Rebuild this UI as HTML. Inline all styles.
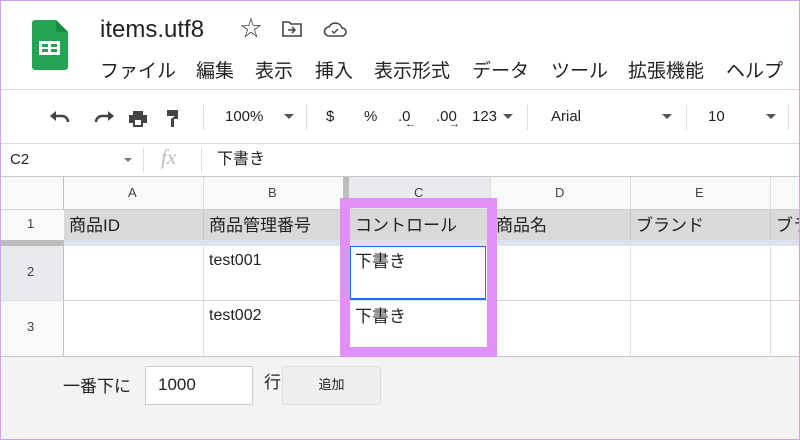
<!DOCTYPE html><html><head><meta charset="utf-8"><style>
*{box-sizing:border-box;margin:0;padding:0}
body{width:800px;height:440px;overflow:hidden;background:#fff;font-family:"Liberation Sans","Noto Sans CJK JP",sans-serif;color:#222;position:relative;line-height:1.15}
.a{position:absolute;white-space:nowrap}
.frame{position:absolute;left:0;top:0;width:800px;height:440px;border:1px solid #c9a6ef;pointer-events:none;z-index:10}
.m{position:absolute;top:61px;font-size:19px;white-space:nowrap}
</style></head><body>
<svg class="a" style="left:32px;top:20px" width="36" height="50" viewBox="0 0 36 50"><path d="M4 0h20l12 12v35a3 3 0 0 1-3 3H3a3 3 0 0 1-3-3V3a3 3 0 0 1 3-3z" fill="#23a455"/><path d="M24 0v12h12z" fill="#178a3f"/><rect x="7" y="21" width="21" height="14" fill="#fff"/><rect x="10" y="24" width="6" height="3" fill="#23a455"/><rect x="19" y="24" width="6" height="3" fill="#23a455"/><rect x="10" y="29" width="6" height="3" fill="#23a455"/><rect x="19" y="29" width="6" height="3" fill="#23a455"/></svg>
<div class="a" style="left:100px;top:16px;font-size:24px">items.utf8</div>
<div class="a" style="left:240px;top:16px;font-size:22px;color:#444">☆</div>
<svg class="a" style="left:282px;top:21px" width="20" height="16"><path d="M1 1h6l2 2h10v12H1z" fill="none" stroke="#444" stroke-width="1.6"/><path d="M6 9h7M10 6l3 3-3 3" fill="none" stroke="#444" stroke-width="1.5"/></svg>
<svg class="a" style="left:323px;top:22px" width="24" height="16"><path d="M6 14h13a4 4 0 0 0 0-8 7 7 0 0 0-13-1 4.5 4.5 0 0 0 0 9z" fill="none" stroke="#444" stroke-width="1.6"/><path d="M9 9l2 2 4-4" fill="none" stroke="#444" stroke-width="1.5"/></svg>
<div class="m" style="left:100px">ファイル</div>
<div class="m" style="left:196px">編集</div>
<div class="m" style="left:255px">表示</div>
<div class="m" style="left:315px">挿入</div>
<div class="m" style="left:374px">表示形式</div>
<div class="m" style="left:472px">データ</div>
<div class="m" style="left:551px">ツール</div>
<div class="m" style="left:628px">拡張機能</div>
<div class="m" style="left:726px">ヘルプ</div>
<div class="a" style="left:0;top:89px;width:800px;height:1px;background:#dadce0"></div>
<svg class="a" style="left:48px;top:108px" width="130" height="20"><path d="M4 8h10a6 6 0 0 1 6 6" fill="none" stroke="#444" stroke-width="2.5"/><path d="M2 8l6-5v10z" fill="#444"/><path d="M64 8H54a6 6 0 0 0-6 6" fill="none" stroke="#444" stroke-width="2.5"/><path d="M66 8l-6-5v10z" fill="#444"/><path d="M85 3h10v4H85zM81 7h18v8h-4v4H85v-4h-4z" fill="#444"/><rect x="87" y="12" width="6" height="5" fill="#fff"/><path d="M119 2h12v6h-12zM131 5h2v6h-7v8h-3v-8" fill="#444"/></svg>
<div class="a" style="left:203px;top:105px;width:1px;height:25px;background:#dadce0"></div>
<div class="a" style="left:225px;top:108px;font-size:15px">100%</div>
<svg class="a" style="left:284px;top:114px" width="10" height="6"><path d="M0 0h10L5 5z" fill="#555"/></svg>
<div class="a" style="left:306px;top:105px;width:1px;height:25px;background:#dadce0"></div>
<div class="a" style="left:326px;top:108px;font-size:15px">$</div>
<div class="a" style="left:364px;top:108px;font-size:15px">%</div>
<div class="a" style="left:398px;top:108px;font-size:15px">.0</div>
<div class="a" style="left:436px;top:108px;font-size:15px">.00</div>
<div class="a" style="left:405px;top:118px;font-size:11px">←</div>
<div class="a" style="left:449px;top:118px;font-size:11px">→</div>
<div class="a" style="left:472px;top:108px;font-size:15px">123</div>
<svg class="a" style="left:503px;top:114px" width="10" height="6"><path d="M0 0h10L5 5z" fill="#555"/></svg>
<div class="a" style="left:527px;top:105px;width:1px;height:25px;background:#dadce0"></div>
<div class="a" style="left:551px;top:108px;font-size:15px">Arial</div>
<svg class="a" style="left:662px;top:114px" width="10" height="6"><path d="M0 0h10L5 5z" fill="#555"/></svg>
<div class="a" style="left:686px;top:105px;width:1px;height:25px;background:#dadce0"></div>
<div class="a" style="left:708px;top:108px;font-size:15px">10</div>
<svg class="a" style="left:766px;top:114px" width="10" height="6"><path d="M0 0h10L5 5z" fill="#555"/></svg>
<div class="a" style="left:788px;top:105px;width:1px;height:25px;background:#dadce0"></div>
<div class="a" style="left:0;top:143px;width:800px;height:1px;background:#dadce0"></div>
<div class="a" style="left:10px;top:151px;font-size:15px">C2</div>
<svg class="a" style="left:124px;top:158px" width="8" height="5"><path d="M0 0h8L4 4z" fill="#777"/></svg>
<div class="a" style="left:143px;top:148px;width:1px;height:24px;background:#dadce0"></div>
<div class="a" style="left:161px;top:145px;font-size:21px;font-style:italic;font-family:'Liberation Serif',serif;color:#bbb">fx</div>
<div class="a" style="left:201px;top:148px;width:1px;height:24px;background:#dadce0"></div>
<div class="a" style="left:217px;top:151px;font-size:16px">下書き</div>
<div class="a" style="left:0;top:176px;width:800px;height:1px;background:#c8c8c8"></div>
<div class="a" style="left:0;top:177px;width:800px;height:33px;background:#f8f9fa"></div>
<div class="a" style="left:343px;top:177px;width:147px;height:33px;background:#e8eaed"></div>
<div class="a" style="left:343px;top:177px;width:6px;height:33px;background:#bdbdbd"></div>
<div class="a" style="left:0;top:209px;width:800px;height:1px;background:#d0d0d0"></div>
<div class="a" style="left:63px;top:177px;width:1px;height:180px;background:#c0c0c0"></div>
<div class="a" style="left:203px;top:177px;width:1px;height:180px;background:#dcdcdc"></div>
<div class="a" style="left:490px;top:177px;width:1px;height:180px;background:#dcdcdc"></div>
<div class="a" style="left:630px;top:177px;width:1px;height:180px;background:#dcdcdc"></div>
<div class="a" style="left:770px;top:177px;width:1px;height:180px;background:#dcdcdc"></div>
<div class="a" style="left:128px;top:186px;font-size:13px;color:#444">A</div>
<div class="a" style="left:268px;top:186px;font-size:13px;color:#444">B</div>
<div class="a" style="left:414px;top:186px;font-size:13px;color:#444">C</div>
<div class="a" style="left:555px;top:186px;font-size:13px;color:#444">D</div>
<div class="a" style="left:695px;top:186px;font-size:13px;color:#444">E</div>
<div class="a" style="left:0;top:210px;width:64px;height:30px;background:#f8f9fa"></div>
<div class="a" style="left:64px;top:210px;width:736px;height:30px;background:#d9d9d9"></div>
<div class="a" style="left:203px;top:210px;width:1px;height:30px;background:#c4c4c4"></div>
<div class="a" style="left:343px;top:210px;width:1px;height:30px;background:#c4c4c4"></div>
<div class="a" style="left:490px;top:210px;width:1px;height:30px;background:#c4c4c4"></div>
<div class="a" style="left:630px;top:210px;width:1px;height:30px;background:#c4c4c4"></div>
<div class="a" style="left:770px;top:210px;width:1px;height:30px;background:#c4c4c4"></div>
<div class="a" style="left:27px;top:217px;font-size:13px;color:#444">1</div>
<div class="a" style="left:69px;top:216px;font-size:17px">商品ID</div>
<div class="a" style="left:209px;top:216px;font-size:17px">商品管理番号</div>
<div class="a" style="left:355px;top:216px;font-size:17px">コントロール</div>
<div class="a" style="left:496px;top:216px;font-size:17px">商品名</div>
<div class="a" style="left:636px;top:216px;font-size:17px">ブランド</div>
<div class="a" style="left:776px;top:216px;font-size:17px">ブラ</div>
<div class="a" style="left:0;top:240px;width:64px;height:6px;background:#bdbdbd"></div>
<div class="a" style="left:64px;top:240px;width:736px;height:6px;background:#dde3ec"></div>
<div class="a" style="left:0;top:246px;width:63px;height:54px;background:#e8eaed"></div>
<div class="a" style="left:0;top:300px;width:63px;height:56px;background:#f8f9fa"></div>
<div class="a" style="left:0;top:300px;width:800px;height:1px;background:#dcdcdc"></div>
<div class="a" style="left:0;top:356px;width:800px;height:1px;background:#c8c8c8"></div>
<div class="a" style="left:27px;top:265px;font-size:13px;color:#444">2</div>
<div class="a" style="left:27px;top:320px;font-size:13px;color:#444">3</div>
<div class="a" style="left:209px;top:252px;font-size:16px">test001</div>
<div class="a" style="left:209px;top:307px;font-size:16px">test002</div>
<div class="a" style="left:350px;top:246px;width:136px;height:54px;border:1px solid #1a73e8;border-bottom-width:2px"></div>
<div class="a" style="left:355px;top:252px;font-size:17px">下書き</div>
<div class="a" style="left:355px;top:307px;font-size:17px">下書き</div>
<div class="a" style="left:0;top:357px;width:800px;height:83px;background:#f3f3f3"></div>
<div class="a" style="left:63px;top:377px;font-size:17px">一番下に</div>
<div class="a" style="left:145px;top:366px;width:108px;height:39px;background:#fff;border:1px solid #ccc;font-size:17px;padding:8px 0 0 12px">1000</div>
<div class="a" style="left:264px;top:373px;font-size:17px">行</div>
<div class="a" style="left:282px;top:366px;width:99px;height:39px;background:#efefef;border:1px solid #ddd;border-radius:3px;font-size:13px;text-align:center;padding-top:11px">追加</div>
<div class="a" style="left:340px;top:198px;width:157px;height:159px;border:10px solid #e090f8"></div>
<div class="frame"></div>
</body></html>
